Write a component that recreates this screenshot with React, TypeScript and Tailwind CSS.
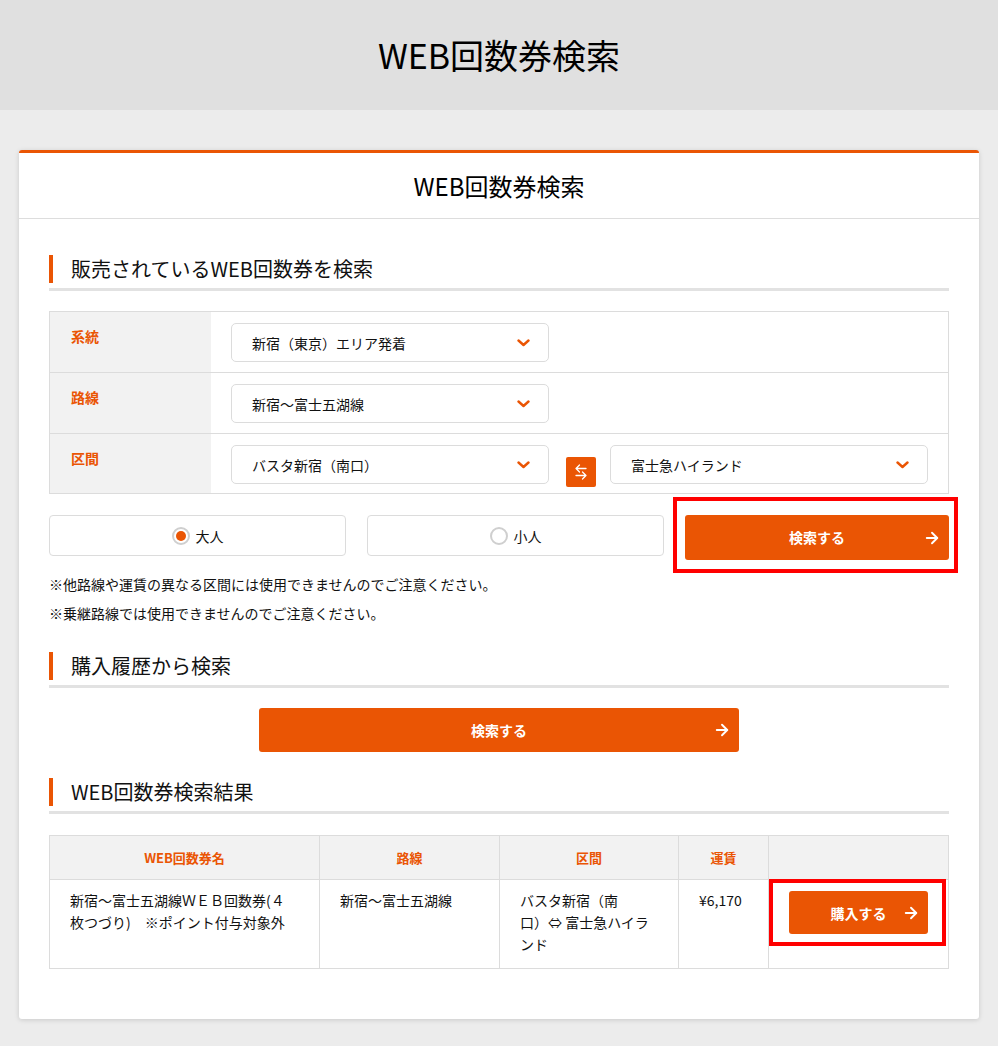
import { ArrowRight } from "lucide-react";

const ORANGE = "bg-[#ea5504]";

function Chevron() {
  return (
    <svg width="13" height="8" viewBox="0 0 13 8" className="shrink-0">
      <path d="M1.5 1.5 L6.5 6 L11.5 1.5" fill="none" stroke="#ea5504" strokeWidth="2.4" strokeLinecap="round" strokeLinejoin="round" />
    </svg>
  );
}

function SelectBox({ value }: { value: string }) {
  return (
    <div className="w-[318px] h-[39px] border border-[#dcdcdc] rounded-[5px] bg-white flex items-center justify-between pl-[20px] pr-[18px]">
      <span className="text-[14px] leading-[20px] text-[#111]">{value}</span>
      <Chevron />
    </div>
  );
}

function SectionTitle({ children }: { children: React.ReactNode }) {
  return (
    <div className="flex items-center pb-[5px] border-b-[3px] border-[#e2e2e2]">
      <div className={`w-[4px] h-[28px] ${ORANGE}`}></div>
      <h3 className="ml-[18px] text-[20px] leading-[28px] text-[#111] font-normal">{children}</h3>
    </div>
  );
}

function FormRow({ label, children, last }: { label: string; children: React.ReactNode; last?: boolean }) {
  return (
    <div className={`flex ${last ? "h-[59px]" : "h-[61px] border-b border-[#dcdcdc]"}`}>
      <div className="w-[161px] bg-[#f2f2f2] pl-[21px] pt-[11px]">
        <span className="text-[14px] leading-[20px] font-bold text-[#ea5504]">{label}</span>
      </div>
      <div className="flex-1 flex items-start pt-[11px] pl-[20px]">{children}</div>
    </div>
  );
}

function Radio({ label, checked }: { label: string; checked?: boolean }) {
  return (
    <div className="h-[41px] border border-[#dcdcdc] rounded-[4px] bg-white flex items-center justify-center gap-[6px]">
      <span className="w-[18px] h-[18px] rounded-full border-2 border-[#cfcfcf] flex items-center justify-center">
        {checked && <span className={`w-[10px] h-[10px] rounded-full ${ORANGE}`}></span>}
      </span>
      <span className="text-[14px] leading-[20px] text-[#111]">{label}</span>
    </div>
  );
}

function Arrow() {
  return <ArrowRight className="absolute right-[8px] top-1/2 -translate-y-1/2" size={18} strokeWidth={2.5} />;
}

export default function App() {
  return (
    <div className="min-h-screen bg-[#ececec] font-['Noto_Sans_CJK_JP','Liberation_Sans',sans-serif] text-[#111]">
      <header className="h-[110px] bg-[#e0e0e0] flex items-center justify-center">
        <h1 className="text-[34px] leading-[40px] font-normal text-black">WEB回数券検索</h1>
      </header>

      <div className="pt-[40px] pb-[26px]">
        <div className="w-[960px] mx-auto bg-white border-t-[3px] border-[#ea5504] rounded-[3px] shadow-[0_1px_5px_rgba(0,0,0,0.15)]">
          <div className="h-[66px] flex items-center justify-center border-b border-[#dddddd]">
            <h2 className="text-[24px] leading-[30px] font-normal text-black">WEB回数券検索</h2>
          </div>

          <div className="px-[30px] pt-[36px] pb-[50px]">
            <SectionTitle>販売されているWEB回数券を検索</SectionTitle>

            <div className="mt-[20px] border border-[#dcdcdc]">
              <FormRow label="系統">
                <SelectBox value="新宿（東京）エリア発着" />
              </FormRow>
              <FormRow label="路線">
                <SelectBox value="新宿～富士五湖線" />
              </FormRow>
              <FormRow label="区間" last>
                <SelectBox value="バスタ新宿（南口）" />
                <button className={`ml-[17px] mt-[12px] w-[30px] h-[30px] ${ORANGE} rounded-[2px] flex items-center justify-center`}>
                  <svg width="30" height="30" viewBox="0 0 30 30">
                    <path d="M20 11.5 H10 M13.5 8 L10 11.5 L13.5 15" fill="none" stroke="white" strokeWidth="1.3" strokeLinecap="round" strokeLinejoin="round" />
                    <path d="M10 18.5 H20 M16.5 15 L20 18.5 L16.5 22" fill="none" stroke="white" strokeWidth="1.3" strokeLinecap="round" strokeLinejoin="round" />
                  </svg>
                </button>
                <div className="ml-[14px]">
                  <SelectBox value="富士急ハイランド" />
                </div>
              </FormRow>
            </div>

            <div className="mt-[21px] grid grid-cols-[297px_297px_264px] gap-[21px] items-start">
              <Radio label="大人" checked />
              <Radio label="小人" />
              <div className="relative">
                <button className={`w-full h-[45px] ${ORANGE} rounded-[3px] text-white text-[14px] font-bold flex items-center justify-center relative`}>
                  検索する
                  <Arrow />
                </button>
                <div className="absolute -left-[12px] -top-[18px] w-[285px] h-[76px] border-4 border-[#ff0000] pointer-events-none"></div>
              </div>
            </div>

            <div className="mt-[10px] text-[14px] leading-[29px] text-[#111]">
              <p>※他路線や運賃の異なる区間には使用できませんのでご注意ください。</p>
              <p>※乗継路線では使用できませんのでご注意ください。</p>
            </div>

            <div className="mt-[24px]">
              <SectionTitle>購入履歴から検索</SectionTitle>
            </div>

            <button className={`mt-[20px] mx-auto w-[480px] h-[44px] ${ORANGE} rounded-[3px] text-white text-[14px] font-bold flex items-center justify-center relative`}>
              検索する
              <Arrow />
            </button>

            <div className="mt-[26px]">
              <SectionTitle>WEB回数券検索結果</SectionTitle>
            </div>

            <table className="mt-[21px] w-full table-fixed border-collapse border border-[#dcdcdc]">
              <colgroup>
                <col className="w-[270px]" />
                <col className="w-[180px]" />
                <col className="w-[179px]" />
                <col className="w-[90px]" />
                <col />
              </colgroup>
              <thead>
                <tr className="h-[44px] bg-[#f2f2f2]">
                  {["WEB回数券名", "路線", "区間", "運賃", ""].map((h, i) => (
                    <th key={i} className="border border-[#dcdcdc] text-[13px] font-bold text-[#ea5504] text-center align-middle">
                      {h}
                    </th>
                  ))}
                </tr>
              </thead>
              <tbody>
                <tr className="h-[89px] text-[14px] leading-[22px] text-[#111]">
                  <td className="border border-[#dcdcdc] align-top pt-[9px] pl-[20px] pr-[24px]">
                    新宿～富士五湖線ＷＥＢ回数券(４枚つづり)　※ポイント付与対象外
                  </td>
                  <td className="border border-[#dcdcdc] align-top pt-[9px] px-[20px]">新宿～富士五湖線</td>
                  <td className="border border-[#dcdcdc] align-top pt-[9px] px-[20px]">{"バスタ新宿（南口）\u2060⇔ 富士急ハイランド"}</td>
                  <td className="border border-[#dcdcdc] align-top pt-[9px] px-[20px]">¥6,170</td>
                  <td className="border border-[#dcdcdc] align-top pt-[11px] px-[20px]">
                    <div className="relative">
                      <button className={`w-full h-[43px] ${ORANGE} rounded-[3px] text-white text-[14px] font-bold flex items-center justify-center relative`}>
                        購入する
                        <Arrow />
                      </button>
                      <div className="absolute -left-[20px] -top-[12px] w-[177px] h-[67px] border-4 border-[#ff0000] pointer-events-none"></div>
                    </div>
                  </td>
                </tr>
              </tbody>
            </table>
          </div>
        </div>
      </div>
    </div>
  );
}
